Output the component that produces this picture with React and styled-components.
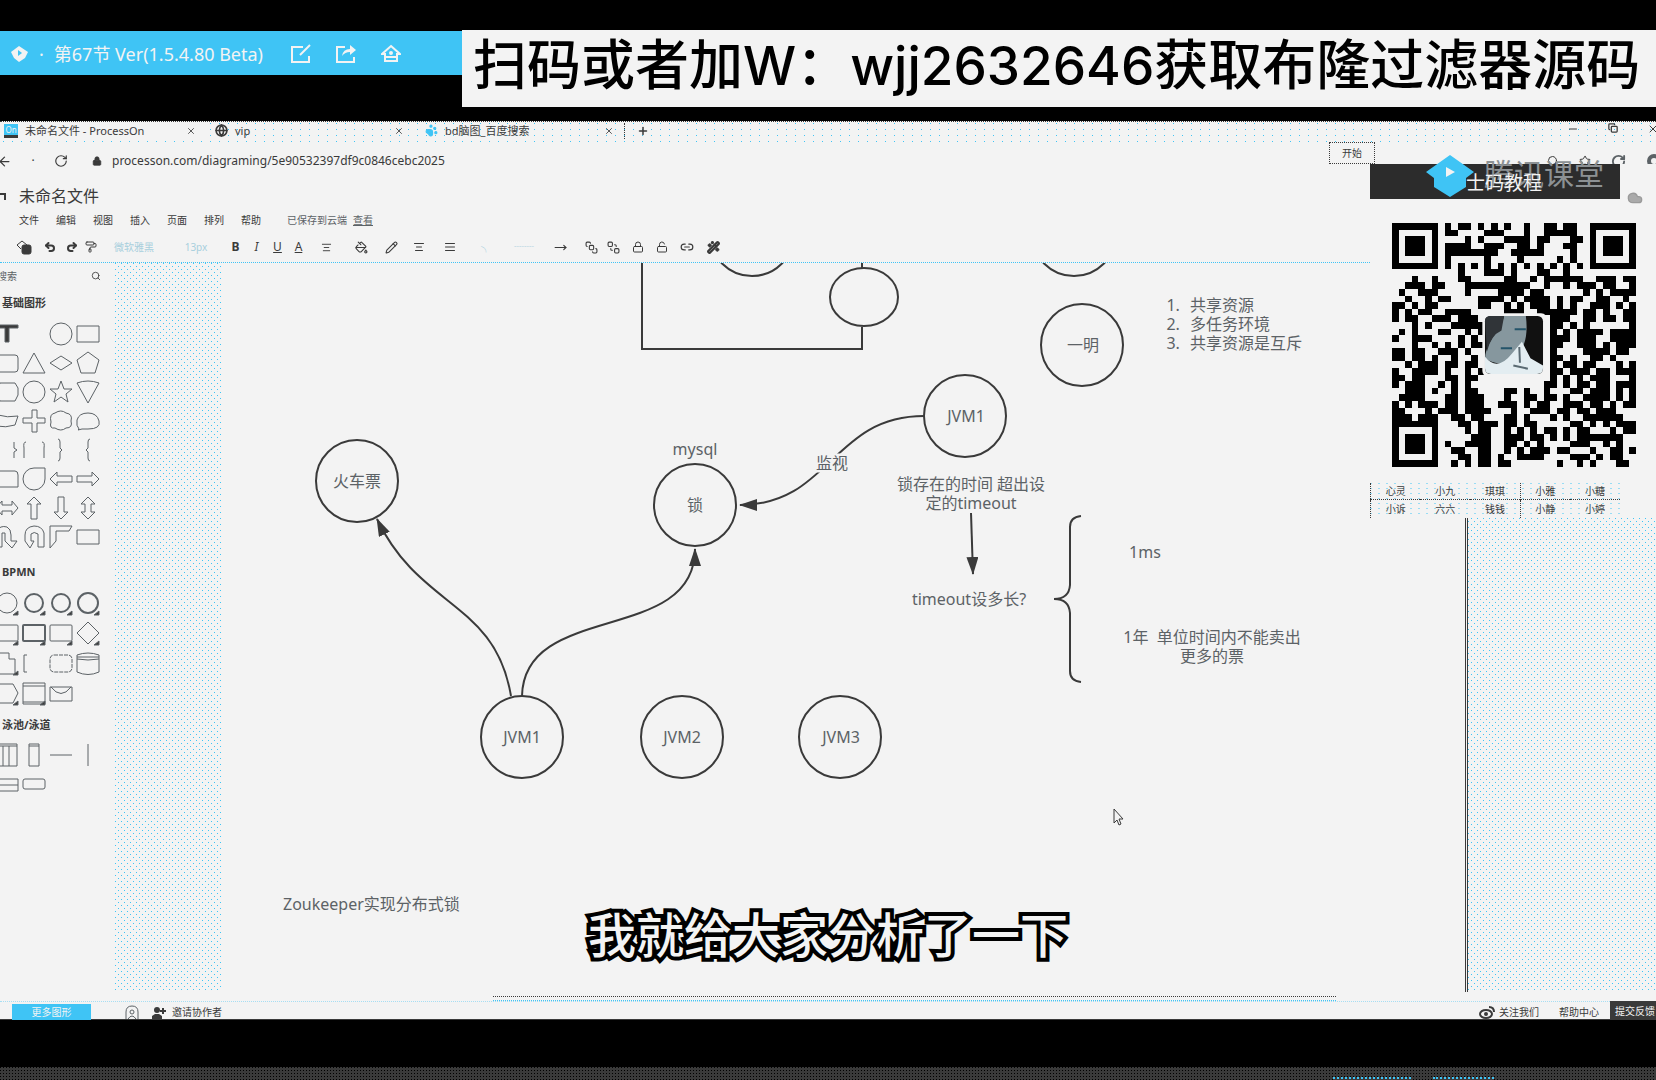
import React from "react";
import styled, { createGlobalStyle } from "styled-components";
import {
  ArrowLeft, RotateCw, Lock, Globe, Search, X, Plus, Minus, Copy, Undo2, Redo2,
  PaintRoller, PaintBucket, Pencil, AlignCenter, AlignJustify, LockOpen, Link2, Wand2,
  Star, BringToFront, SendToBack, PawPrint, MoveRight, Cloud,
} from "lucide-react";

const C = { paper: "#f3f3f3", blue: "#3fc4f5", ink: "#3a3a3a", soft: "#5c6266", black: "#000" };
const sans = '"Noto Sans", "Noto Sans CJK SC", sans-serif';

const GlobalStyle = createGlobalStyle`
  * { box-sizing: border-box; }
  body { margin: 0; background: ${C.black}; color: ${C.ink}; font: 12px/16px ${sans}; overflow: hidden; }
  button { font: inherit; color: inherit; border: 0; background: none; padding: 0; }
  a { color: inherit; }
`;

const Root = styled.div`
  display: flex; flex-direction: column; min-height: 100vh; position: relative; overflow: hidden;
`;
const Header = styled.header`
  display: flex; align-items: center; padding: 30px 0 14px;
`;
const TitleBar = styled.div`
  display: flex; align-items: center; align-self: flex-start; gap: 10px;
  width: 462px; height: 44px; margin-top: 1px; padding: 2px 0 0 10px;
  background: ${C.blue}; color: ${C.paper}; font-size: 18px; line-height: 24px; white-space: nowrap;
`;
const TitleTools = styled.div`
  display: flex; gap: 25px; margin-left: 18px;
  button { display: flex; }
`;
const Banner = styled.h1`
  flex: 1; min-width: 0; height: 77px; margin: 0; padding: 0 0 0 11px;
  background: ${C.paper}; color: ${C.black};
  font: 500 54px/64px "Noto Sans CJK SC", sans-serif; white-space: nowrap;
`;
const Latin = styled.span`font-family: Inter, sans-serif; font-size: 53px;`;

const Screen = styled.main`
  flex: 1; display: flex; flex-direction: column; background: ${C.paper};
`;
const speck = (x) => `conic-gradient(from 270deg at 1px 1px, ${x} 90deg, transparent 0)`;

const TabStrip = styled.div`
  display: flex; height: 22px; align-items: center; padding-bottom: 4px;
  font-size: 11px; border-top: 1px dotted ${C.ink};
  background: ${speck(C.blue)} 210px 7px / 9px 6px repeat, ${C.paper};
`;
const Tab = styled.div`
  display: flex; align-items: center; gap: 7px; width: ${(p) => p.$w}px; padding: 0 10px 0 ${(p) => p.$pad || 7}px;
  border-right: ${(p) => (p.$line ? `1px dotted ${C.ink}` : "0")}; white-space: nowrap;
  background: ${(p) => (p.$active ? C.paper : "transparent")};
  button { margin-left: auto; display: flex; }
`;
const Favicon = styled.span`
  width: 14px; height: 14px; background: ${C.blue}; border-bottom: 3px solid ${C.ink};
  color: ${C.paper}; font-size: 8px; line-height: 11px; text-align: center;
`;
const NewTab = styled.button`padding: 0 12px; display: flex;`;
const WindowTools = styled.div`
  display: flex; gap: 29px; margin-left: auto; margin-right: -3px; padding-bottom: 4px;
  button { display: flex; }
`;
const AddressBar = styled.div`
  display: flex; align-items: center; height: 36px; gap: 10px;
  button { display: flex; }
`;
const NavButtons = styled.div`
  display: flex; width: 85px; justify-content: space-between; align-items: center; padding-right: 14px; margin-left: -3px;
`;
const UrlField = styled.input`
  flex: 1; border: 0; outline: 0; background: none; color: ${C.ink}; font: 12px/20px ${sans}; padding: 0;
`;
const AddressTools = styled.div`display: flex; gap: 20px; margin-right: -6px; align-items: center;`;

const DocRow = styled.div`
  display: flex; align-items: center; height: 34px; gap: 12px;
  h2 { margin: 0; font: 400 16px/24px ${sans}; }
`;
const MenuRow = styled.nav`
  display: flex; align-items: center; gap: 17px; height: 14px; padding-left: 19px; font-size: 10px; line-height: 14px;
`;
const SaveState = styled.span`
  margin-left: 9px; color: ${C.soft};
  a { margin-left: 6px; }
`;
const Toolbar = styled.div`
  display: flex; align-items: center; height: 36px; padding: 5px 0 0 11px;
  border-bottom: 1px dotted ${C.blue}; font-size: 11px; color: ${C.ink};
`;
const Tool = styled.button`
  display: flex; justify-content: center; align-items: center; width: ${(p) => p.$w || 21}px;
  font-weight: ${(p) => (p.$bold ? 700 : 400)}; font-style: ${(p) => (p.$italic ? "italic" : "normal")};
  text-decoration: ${(p) => (p.$under ? "underline" : "none")};
  color: ${(p) => (p.$faint ? "#a8cfdd" : C.ink)}; font-size: ${(p) => (p.$faint ? 10 : 12)}px; white-space: nowrap;
`;

const Workspace = styled.div`flex: 1; display: flex;`;
const Sidebar = styled.aside`
  width: 115px; flex: none; overflow: hidden;
`;
const SearchBox = styled.label`
  display: flex; align-items: center; height: 26px; padding-right: 14px; margin-left: -3px;
  input { width: 94px; border: 0; outline: 0; background: none; font: 10px/16px ${sans}; padding: 0; color: ${C.ink}; }
  input::placeholder { color: ${C.soft}; opacity: 1; }
`;
const GroupTitle = styled.h3`
  margin: 0; padding-left: 2px; font: 700 11px/16px ${sans}; height: ${(p) => p.$h || 24}px; padding-top: ${(p) => p.$top || 0}px;
`;
const ShapeGrid = styled.div`
  display: grid; grid-template-columns: repeat(4, 27px); grid-auto-rows: ${(p) => p.$row || 29}px;
  align-items: center; margin-left: -7px;
  button { display: flex; justify-content: center; }
`;
const CanvasArea = styled.div`flex: 1; min-width: 0; display: flex; flex-direction: column;`;
const CanvasRow = styled.div`flex: 1; display: flex; min-height: 700px;`;
const Gutter = styled.div`
  width: ${(p) => p.$w}px; flex: none;
  border-left: ${(p) => (p.$edge ? `3px double ${C.ink}` : "0")};
  background:
    ${speck(C.blue)} 0 0 / 6px 6px,
    ${speck(C.blue)} 3px 3px / 6px 6px;
`;
const Page = styled.section`flex: 1; position: relative; overflow: hidden;`;
const Edges = styled.svg`position: absolute; left: 0; top: 0; width: 1244px; height: 700px;`;
const Label = styled.div`
  position: absolute; left: ${(p) => p.$x}px; top: ${(p) => p.$y}px;
  transform: ${(p) => (p.$left ? "translateY(-50%)" : "translate(-50%, -50%)")};
  font-size: ${(p) => p.$size || 16}px; line-height: 19px; white-space: pre; text-align: ${(p) => (p.$left ? "left" : "center")};
  background: ${C.paper}; color: ${C.soft};
`;
const Steps = styled.ol`
  position: absolute; left: 945px; top: 33px; margin: 0; padding-left: 18px;
  font-size: 16px; line-height: 19px; white-space: nowrap; color: ${C.soft};
  li { padding-left: 6px; }
`;
const Pointer = styled.svg`position: absolute; left: 891px; top: 545px;`;
const Scroller = styled.div`
  height: 9px; padding: 4px 320px 0 378px;
  div { height: 5px; border-top: 1px dotted ${C.ink}; border-bottom: 1px dotted ${C.blue}; }
`;

const BottomBar = styled.div`
  display: flex; align-items: center; height: 19px; border-bottom: 1px solid ${C.ink};
  border-top: 1px dotted #a7def3; padding: 3px 0 0 12px; gap: 20px; font-size: 10px; line-height: 14px;
`;
const MoreShapes = styled.button`
  width: 79px; height: 16px; background: ${C.blue}; color: ${C.paper}; font-size: 10px; margin-right: 14px;
`;
const Invite = styled.button`display: flex; align-items: center; gap: 6px; margin-left: -7px;`;
const BottomLinks = styled.div`
  display: flex; align-items: center; margin-left: auto; gap: 20px; white-space: nowrap;
  a { display: flex; gap: 4px; text-decoration: none; align-items: center; }
`;
const Feedback = styled.button`
  align-self: flex-end; width: 46px; height: 18px; padding: 2px 0 0 5px; background: ${C.ink}; color: ${C.paper};
  text-align: left; margin-left: -9px; white-space: nowrap;
`;
const Gap = styled.div`height: 47px; background: ${C.black};`;
const Taskbar = styled.footer`
  height: 13px; display: flex; justify-content: flex-end; align-items: flex-end; gap: 22px; padding-right: 162px;
  background: ${speck("#000")} 0 0 / 3px 3px, ${C.ink};
`;
const TaskItem = styled.span`width: ${(p) => p.$w}px; height: 3px; border-top: 2px dotted ${C.blue}; background: ${C.ink};`;

const StartButton = styled.button`
  position: absolute; right: 281px; top: 142px; width: 46px; height: 22px;
  border: 1px dotted ${C.ink}; font-size: 10px; background: ${C.paper};
`;
const SidePanel = styled.aside`
  position: absolute; right: 0; top: 164px; width: 286px; background: ${C.paper};
`;
const Brand = styled.div`
  display: flex; position: relative; width: 250px; height: 35px; background: #2c2c2c;
`;
const BrandLogo = styled.svg`position: absolute; left: 56px; top: -9px;`;
const BrandName = styled.span`
  position: absolute; left: 114px; top: -8px; font-size: 30px; line-height: 36px; color: #8c9194; white-space: nowrap;
`;
const BrandSub = styled.span`
  position: absolute; left: 96px; top: 6px; font-size: 19px; line-height: 26px; color: ${C.paper}; white-space: nowrap;
`;
const QrFrame = styled.div`
  display: flex; justify-content: center; padding: 24px 0 16px 2px;
`;
const Names = styled.table`
  width: 250px; border-collapse: collapse; table-layout: fixed; font-size: 10px; line-height: 14px; text-align: center;
  border-left: 1px dotted ${C.ink};
  background: ${speck(C.blue)} 0 0 / 8px 5px;
  td { padding: 0; height: 16px; }
  tr + tr td { border-top: 1px dotted ${C.ink}; height: 19px; }
  td:nth-child(4) { border-left: 1px dotted ${C.ink}; }
`;
const CloudMark = styled.span`position: absolute; right: 13px; top: 26px; color: #9a9a9a; display: flex;`;
const Subtitle = styled.p`
  position: absolute; left: 0; right: 0; bottom: 112px; margin: 0; text-align: center;
  font: 500 48px/72px "Noto Sans CJK SC", sans-serif; color: ${C.paper};
  -webkit-text-stroke: 8px ${C.black}; paint-order: stroke fill; stroke-linejoin: round;
`;

/* Dark modules of every row; "." is light. */
const qrRows = [
  "#######.#.##.#.#.#..#..##.##..#######",
  "#.....#.##....###...#..#####..#.....#",
  "#.###.#....#.#...####.##...##.#.###.#",
  "#.###.#.####..###..##.#...##..#.###.#",
  "#.###.#.########..#####....#..#.###.#",
  "#.....#.#.....#....#.....#.#..#.....#",
  "#######.#.#.#.#.#.#.#.#.#.#.#.#######",
  "..........#...###.#...##..#..........",
  "...#..#...##.....##..#.######..###.##",
  "..###.##...##########..#..#.###.##..#",
  ".#..###....#....####.##......#.#.####",
  "..#..#.##....####.#.####.#.##..##..#.",
  "##.#.##......##..#.#.###.#.#..###.#.#",
  "#.#.##..####.....###..######.##.#..##",
  "#.##..###.###...........###..##.##.##",
  "...#.#...#####..........##.#.#......#",
  ".#.#...##..#.#..........#.#.####.####",
  "#..###....#.#...........###.###..####",
  "...#..#.#.#.##..........##..###.#.###",
  "##.##..###.#............#....####.##.",
  "##.##.#..#..#...........##.#..##.#...",
  "..#.###.##.##...........#.##.##...#.#",
  "#..####.#..#.#..........##.###.##.###",
  "##.##...##.##...........#.#.#.###...#",
  "#.###..#.#.#...........##.#.##.##.###",
  "..###.#..#.##....##.#..#...##.###.#.#",
  ".####...##.###...#..##.##.#..####.#.#",
  "#.#.###.##.###..###.#.##..###.##.#.##",
  "##...#.###.####...#..###.##.##.###...",
  "###.###..##.##...##.#...#.#..######..",
  "#######...##.###.##.##.....##.#.#.###",
  "#.....#....#.##..#.#.#.##.#.##...#.##",
  "#.###.#.....###..###.##.#.#.#######..",
  "#.###.#.#..####..##.#.#....###..#.#..",
  "#.###.#..##..##..#.#.###.##...#..##.#",
  "#.....#...##.##.#..####....###.#.##..",
  "#######..#.#.##.##.......#..#.#...##.",
];

function QrCode() {
  return (
    <svg width="244" height="244" viewBox="0 0 37 37" shapeRendering="crispEdges" role="img" aria-label="二维码">
      {qrRows.map((row, y) =>
        [...row].map((m, x) => (m === "#" ? <rect key={`${x}-${y}`} x={x} y={y} width="1" height="1" /> : null))
      )}
      <g shapeRendering="auto">
        <rect x="13.7" y="13.7" width="9.9" height="9.7" rx="1" fill={C.paper} />
        <rect x="14.1" y="14.1" width="8.8" height="8.8" rx="0.8" fill="#111" />
        <path d="M14.1 20.5 C14.4 17.5 16.6 16.2 17 14.1 H20.3 C20.6 16.5 20.3 18.5 19.3 19.6 C18 21.4 16 21.8 14.1 20.5Z" fill="#86979e" />
        <path d="M14.1 14.8 Q14.1 14.1 15 14.1 H17 L16.6 16.3 Q15 17 14.4 19.5Z" fill="#303438" />
        <path d="M18.6 16.1 H20.3 M16.5 19 H18.2" stroke="#24546a" strokeWidth=".3" fill="none" />
        <path d="M14.1 20.3 Q16 22.6 18.2 19.8 L19.7 18 L21 20.5 L22.9 21.6 V22 Q22.9 22.9 22 22.9 H15 Q14.1 22.9 14.1 22Z" fill="#e3edf1" />
        <path d="M19.3 18.8 L19.4 21.2 M18.4 21.6 L20.6 22.1" stroke="#5a6a72" strokeWidth=".3" fill="none" />
      </g>
    </svg>
  );
}

const basicShapes = [
  <path d="M1 3H23V6H14V20H10V6H1Z" fill={C.ink} />, null, <circle cx="12" cy="12" r="11" />, <path d="M1 4H23V20H1Z" />,
  <rect x="1" y="4" width="22" height="17" rx="3" />, <path d="M12 2L23 22H1Z" />, <path d="M12 5L23 12L12 19L1 12Z" />, <path d="M12 1L23 9L19 22H5L1 9Z" />,
  <path d="M5 3H20L23 8V15L20 21H5L1 12Z" />, <circle cx="12" cy="12" r="11" />, <path d="M12 1L15 9H23L17 14L19 22L12 17L5 22L7 14L1 9H9Z" />, <path d="M1 3Q12-1 23 3L12 23Z" />,
  <path d="M3 6Q12 9 23 7L20 16Q11 19 1 17Z" />, <path d="M10 1H15V9H23V14H15V23H10V14H1V9H10Z" />, <path d="M6 4Q12 0 17 4Q24 5 22 12Q24 19 17 19Q12 23 6 19Q0 20 2 13Q0 5 6 4Z" />, <path d="M3 20Q0 17 1 11Q3 4 12 4T23 12T12 20H6L2 21Z" />,
  <path d="M3 4Q1 12 3 20M19 4V10L22 12L19 14V20" />, <path d="M4 4Q1 4 2 10V20M20 4Q23 4 22 10V20" />, <path d="M9 1Q11 1 11 4V10L13 12L11 14V20Q11 23 9 23" />, <path d="M14 1Q12 1 12 4V10L10 12L12 14V20Q12 23 14 23" />,
  <path d="M1 20V4H20Q23 4 23 8V20Z" />, <path d="M12 1H23V12A11 11 0 1 1 12 1Z" />, <path d="M1 12L8 5V9H23V15H8V19Z" />, <path d="M23 12L16 5V9H1V15H16V19Z" />,
  <path d="M1 12L7 5V9H17V5L23 12L17 19V15H7V19Z" />, <path d="M12 1L19 8H15V23H9V8H5Z" />, <path d="M12 23L19 16H15V1H9V16H5Z" />, <path d="M12 1L19 8H15V16H19L12 23L5 16H9V8H5Z" />,
  <path d="M2 22V6Q5 0 12 2Q16 4 16 10V16H22L17 23L10 16V8H7V22Z" />, <path d="M22 22V8Q20 1 12 1Q3 2 3 10V16L8 23L12 16H9V9Q12 6 16 9V22Z" />, <path d="M1 23V1H23L20 6H7V16Z" />, <path d="M1 5H23V19H1Z" />,
];
const corner = <path d="M23 19V23H18Z" fill={C.ink} />;
const bpmnShapes = [
  <><circle cx="12" cy="11" r="10" />{corner}</>, <><circle cx="12" cy="11" r="9" strokeWidth="2" />{corner}</>,
  <><circle cx="12" cy="11" r="9" strokeWidth="2" />{corner}</>, <><circle cx="12" cy="11" r="10" strokeWidth="2" />{corner}</>,
  <><rect x="1" y="3" width="22" height="16" rx="1" />{corner}</>, <><rect x="1" y="3" width="22" height="16" rx="1" strokeWidth="2" />{corner}</>, <><rect x="1" y="3" width="22" height="16" rx="1" />{corner}</>, <><path d="M12 0L23 11L12 22L1 11Z" />{corner}</>,
  <><path d="M1 1H14V7H20V22H1Z" />{corner}</>, <path d="M5 3H2V20H5" />, <rect x="1" y="3" width="22" height="17" rx="4" strokeDasharray="4 1" />, <path d="M1 3Q12-1 23 3V20Q12 25 1 20ZM1 5H23M1 7Q12 9 23 7" />,
  <><path d="M4 2H18L23 11L18 21H4Z" />{corner}</>, <><path d="M1 1H23V22H1ZM1 4H23M1 20H23" />{corner}</>, <path d="M1 5H23V19H1ZM2 5Q12 18 22 5" />,
];
const laneShapes = [
  <path d="M1 1H22V23H1ZM1 3H22M8 3V23M14 3V23" />, <path d="M7 1H17V23H7ZM7 3H17" />, <path d="M1 12H23" />, <path d="M12 1V23" />,
  <path d="M1 6H23V18H1ZM1 12H23" />, <rect x="1" y="6" width="22" height="10" rx="2" />,
];
function Shape({ children }) {
  return (
    <button type="button">
      <svg width="24" height="24" viewBox="0 0 24 24" fill="none" stroke={C.soft} strokeWidth="1">{children}</svg>
    </button>
  );
}

function Diagram() {
  return (
    <Page>
      <Edges viewBox="221 262 1244 700" fill="none" stroke={C.ink} strokeWidth="2">
        <defs>
          <marker id="tip" markerWidth="18" markerHeight="12" refX="17" refY="6" orient="auto" markerUnits="userSpaceOnUse">
            <path d="M0 0L18 6L0 12Z" fill={C.ink} stroke="none" />
          </marker>
        </defs>
        <path d="M642 262V348H862V326M862 262V267" />
        <ellipse cx="864" cy="296" rx="34" ry="29" />
        <circle cx="752" cy="233" r="42" /><circle cx="1074" cy="233" r="42" />
        <circle cx="1082" cy="344" r="41" /><circle cx="965" cy="415" r="41" />
        <circle cx="357" cy="480" r="41" /><circle cx="695" cy="504" r="41" />
        <circle cx="522" cy="736" r="41" /><circle cx="682" cy="736" r="41" /><circle cx="840" cy="736" r="41" />
        <path d="M511 695C495 600 420 608 377 518" markerEnd="url(#tip)" />
        <path d="M522 695C524 600 695 644 695 548" markerEnd="url(#tip)" />
        <path d="M924 415C832 415 830 504 740 504" markerEnd="url(#tip)" />
        <path d="M971 512L973 573" markerEnd="url(#tip)" />
        <path d="M1081 515Q1070 516 1070 526V584Q1069 598 1054 598Q1069 598 1070 612V670Q1070 680 1081 681" />
      </Edges>
      <Label $x={136} $y={218}>火车票</Label>
      <Label $x={474} $y={186}>mysql</Label>
      <Label $x={474} $y={242}>锁</Label>
      <Label $x={611} $y={200}>监视</Label>
      <Label $x={745} $y={153}>JVM1</Label>
      <Label $x={862} $y={82}>一明</Label>
      <Label $x={750} $y={231}>{"锁存在的时间 超出设\n定的timeout"}</Label>
      <Label $x={748} $y={336}>timeout设多长?</Label>
      <Label $x={924} $y={289}>1ms</Label>
      <Label $x={991} $y={384}>{"1年  单位时间内不能卖出\n更多的票"}</Label>
      <Label $x={301} $y={474}>JVM1</Label>
      <Label $x={461} $y={474}>JVM2</Label>
      <Label $x={620} $y={474}>JVM3</Label>
      <Label $x={62} $y={641} $left>Zoukeeper实现分布式锁</Label>
      <Steps><li>共享资源</li><li>多任务环境</li><li>共享资源是互斥</li></Steps>
      <Pointer width="12" height="18" viewBox="0 0 12 18" fill={C.paper} stroke={C.ink}><path d="M2 1V15L5 12L7 17L9 16L7 11H11Z" /></Pointer>
    </Page>
  );
}

export default function App() {
  return (
    <Root>
      <GlobalStyle />
      <Header>
        <TitleBar>
          <svg width="19" height="18" viewBox="0 0 19 18" fill={C.paper}><path d="M9 1L18 7L15 13L9 17L4 13L1 7Z" /><path d="M8 5L12 8L8 11Z" fill={C.blue} /></svg>
          <span>·</span>
          <span>第67节 Ver(1.5.4.80 Beta)</span>
          <TitleTools>
            <button type="button" aria-label="编辑">
              <svg width="20" height="20" viewBox="0 0 20 20" fill="none" stroke={C.paper} strokeWidth="2"><path d="M12 3H1V18H18V12" /><path d="M9 11L19 1" /></svg>
            </button>
            <button type="button" aria-label="分享">
              <svg width="20" height="20" viewBox="0 0 20 20" fill="none" stroke={C.paper} strokeWidth="2"><path d="M9 3H1V18H18V13" /><path d="M6 12Q7 5 14 5V1L20 6L14 11V8Q9 8 6 12Z" fill={C.paper} stroke="none" /></svg>
            </button>
            <button type="button" aria-label="主页">
              <svg width="20" height="20" viewBox="0 0 20 20" fill="none" stroke={C.paper} strokeWidth="2"><path d="M10 2L19 10H16V17H4V10H1Z" /><circle cx="10" cy="9" r="1" /><path d="M5 13H15" /></svg>
            </button>
          </TitleTools>
        </TitleBar>
        <Banner>扫码或者加<Latin>W</Latin>：<Latin>wjj2632646</Latin>获取布隆过滤器源码</Banner>
      </Header>

      <Screen>
        <TabStrip>
          <Tab $w={206} $pad={4} $active><Favicon>On</Favicon><span>未命名文件 - ProcessOn</span><button type="button" aria-label="关闭"><X size={10} /></button></Tab>
          <Tab $w={208} $pad={9}><Globe size={13} strokeWidth={3} /><span>vip</span><button type="button" aria-label="关闭"><X size={10} /></button></Tab>
          <Tab $w={211} $pad={11} $line><PawPrint size={13} color={C.blue} fill={C.blue} /><span>bd脑图_百度搜索</span><button type="button" aria-label="关闭"><X size={10} /></button></Tab>
          <NewTab type="button" aria-label="新标签页"><Plus size={12} strokeWidth={3} /></NewTab>
          <WindowTools>
            <button type="button" aria-label="最小化"><Minus size={12} /></button>
            <button type="button" aria-label="还原"><Copy size={10} strokeWidth={3} /></button>
            <button type="button" aria-label="关闭窗口"><X size={12} /></button>
          </WindowTools>
        </TabStrip>
        <AddressBar>
          <NavButtons>
            <button type="button" aria-label="后退"><ArrowLeft size={15} /></button>
            <span>·</span>
            <button type="button" aria-label="刷新"><RotateCw size={14} /></button>
          </NavButtons>
          <Lock size={10} fill={C.ink} />
          <UrlField aria-label="地址" defaultValue="processon.com/diagraming/5e90532397df9c0846cebc2025" />
          <AddressTools>
            <button type="button" aria-label="查找"><Search size={12} /></button>
            <button type="button" aria-label="收藏"><Star size={12} /></button>
            <button type="button" aria-label="同步"><RotateCw size={15} strokeWidth={3} color={C.soft} /></button>
            <button type="button" aria-label="账户">
              <svg width="16" height="16" viewBox="0 0 16 16" fill="none" stroke={C.soft} strokeWidth="4"><circle cx="8" cy="8" r="5" /></svg>
            </button>
          </AddressTools>
        </AddressBar>
        <DocRow>
          <svg width="7" height="10" viewBox="0 0 7 10" fill="none" stroke={C.ink} strokeWidth="2"><path d="M0 3H5V9" /></svg>
          <h2>未命名文件</h2>
        </DocRow>
        <MenuRow>
          {["文件", "编辑", "视图", "插入", "页面", "排列", "帮助"].map((m) => <button type="button" key={m}>{m}</button>)}
          <SaveState>已保存到云端<a href="#view">查看</a></SaveState>
        </MenuRow>
        <Toolbar>
          <Tool $w={26}>
            <svg width="16" height="15" viewBox="0 0 16 15" fill="none" stroke={C.ink}><path d="M5 9L1 5L6 1L11 5" /><rect x="6" y="5" width="9" height="9" rx="2" fill={C.ink} /></svg>
          </Tool>
          <Tool $w={26}><Undo2 size={12} strokeWidth={4} /></Tool>
          <Tool $w={18}><Redo2 size={12} strokeWidth={4} /></Tool>
          <Tool $w={20}><PaintRoller size={12} /></Tool>
          <Tool $w={66} $faint>微软雅黑</Tool>
          <Tool $w={58} $faint>13px</Tool>
          <Tool $bold>B</Tool>
          <Tool $italic>I</Tool>
          <Tool $under>U</Tool>
          <Tool $under>A</Tool>
          <Tool $w={34}><AlignCenter size={11} /></Tool>
          <Tool $w={36}><PaintBucket size={13} /></Tool>
          <Tool $w={24}><Pencil size={13} /></Tool>
          <Tool $w={32}><AlignCenter size={12} /></Tool>
          <Tool $w={30}><AlignJustify size={12} /></Tool>
          <Tool $w={42} $faint>╮</Tool>
          <Tool $w={34} $faint>┈┈</Tool>
          <Tool $w={38}><MoveRight size={13} /></Tool>
          <Tool $w={24}><BringToFront size={13} /></Tool>
          <Tool $w={20}><SendToBack size={13} /></Tool>
          <Tool $w={30}><Lock size={12} /></Tool>
          <Tool $w={18}><LockOpen size={12} /></Tool>
          <Tool $w={32}><Link2 size={14} /></Tool>
          <Tool $w={20}><Wand2 size={13} strokeWidth={4} /></Tool>
        </Toolbar>

        <Workspace>
          <Sidebar>
            <SearchBox><input placeholder="搜索" aria-label="搜索图形" /><Search size={10} /></SearchBox>
            <GroupTitle $h={30} $top={6}>基础图形</GroupTitle>
            <ShapeGrid>{basicShapes.map((s, i) => <Shape key={i}>{s}</Shape>)}</ShapeGrid>
            <GroupTitle $h={38} $top={13}>BPMN</GroupTitle>
            <ShapeGrid $row={30}>{bpmnShapes.map((s, i) => <Shape key={i}>{s}</Shape>)}</ShapeGrid>
            <GroupTitle $h={31} $top={8}>泳池/泳道</GroupTitle>
            <ShapeGrid $row={30}>{laneShapes.map((s, i) => <Shape key={i}>{s}</Shape>)}</ShapeGrid>
          </Sidebar>
          <CanvasArea>
            <CanvasRow>
              <Gutter $w={106} />
              <Diagram />
              <Gutter $w={191} $edge />
            </CanvasRow>
            <Scroller><div /></Scroller>
          </CanvasArea>
        </Workspace>

        <BottomBar>
          <MoreShapes type="button">更多图形</MoreShapes>
          <svg width="14" height="14" viewBox="0 0 14 14" fill="none" stroke={C.soft}><path d="M1 14V7Q1 1 7 1T13 7V14" /><circle cx="7" cy="7" r="2" /><path d="M3 14Q7 8 11 14" /></svg>
          <Invite type="button">
            <svg width="14" height="13" viewBox="0 0 14 13" fill={C.ink}><circle cx="5" cy="4" r="3" /><path d="M0 13V10L3 8H7L10 10V13ZM8 4H10V2H12V4H14V6H12V8H10V6H8Z" /></svg>
            邀请协作者
          </Invite>
          <BottomLinks>
            <a href="#follow">
              <svg width="16" height="13" viewBox="0 0 16 13" fill="none" stroke={C.ink} strokeWidth="2"><ellipse cx="7" cy="8" rx="6" ry="4" /><circle cx="7" cy="8" r="1" /><path d="M10 1Q15 1 15 6" /></svg>
              关注我们
            </a>
            <a href="#help">帮助中心</a>
          </BottomLinks>
          <Feedback type="button">提交反馈</Feedback>
        </BottomBar>
      </Screen>
      <Gap />
      <Taskbar><TaskItem $w={78} /><TaskItem $w={61} /></Taskbar>

      <StartButton type="button">开始</StartButton>
      <SidePanel>
        <Brand>
          <BrandName>腾讯课堂</BrandName>
          <BrandLogo width="48" height="42" viewBox="0 0 48 42"><path d="M24 0L48 17L40 23V32L24 42L8 32V23L0 17Z" fill={C.blue} /><path d="M20 12L29 17L20 22Z" fill={C.paper} /></BrandLogo>
          <BrandSub>士码教程</BrandSub>
        </Brand>
        <CloudMark><Cloud size={16} fill="#aaaaaa" /></CloudMark>
        <QrFrame><QrCode /></QrFrame>
        <Names>
          <tbody>
            <tr>{["心灵", "小九", "琪琪", "小雅", "小糖"].map((n) => <td key={n}>{n}</td>)}</tr>
            <tr>{["小诉", "六六", "钱钱", "小静", "小婷"].map((n) => <td key={n}>{n}</td>)}</tr>
          </tbody>
        </Names>
      </SidePanel>
      <Subtitle>我就给大家分析了一下</Subtitle>
    </Root>
  );
}
